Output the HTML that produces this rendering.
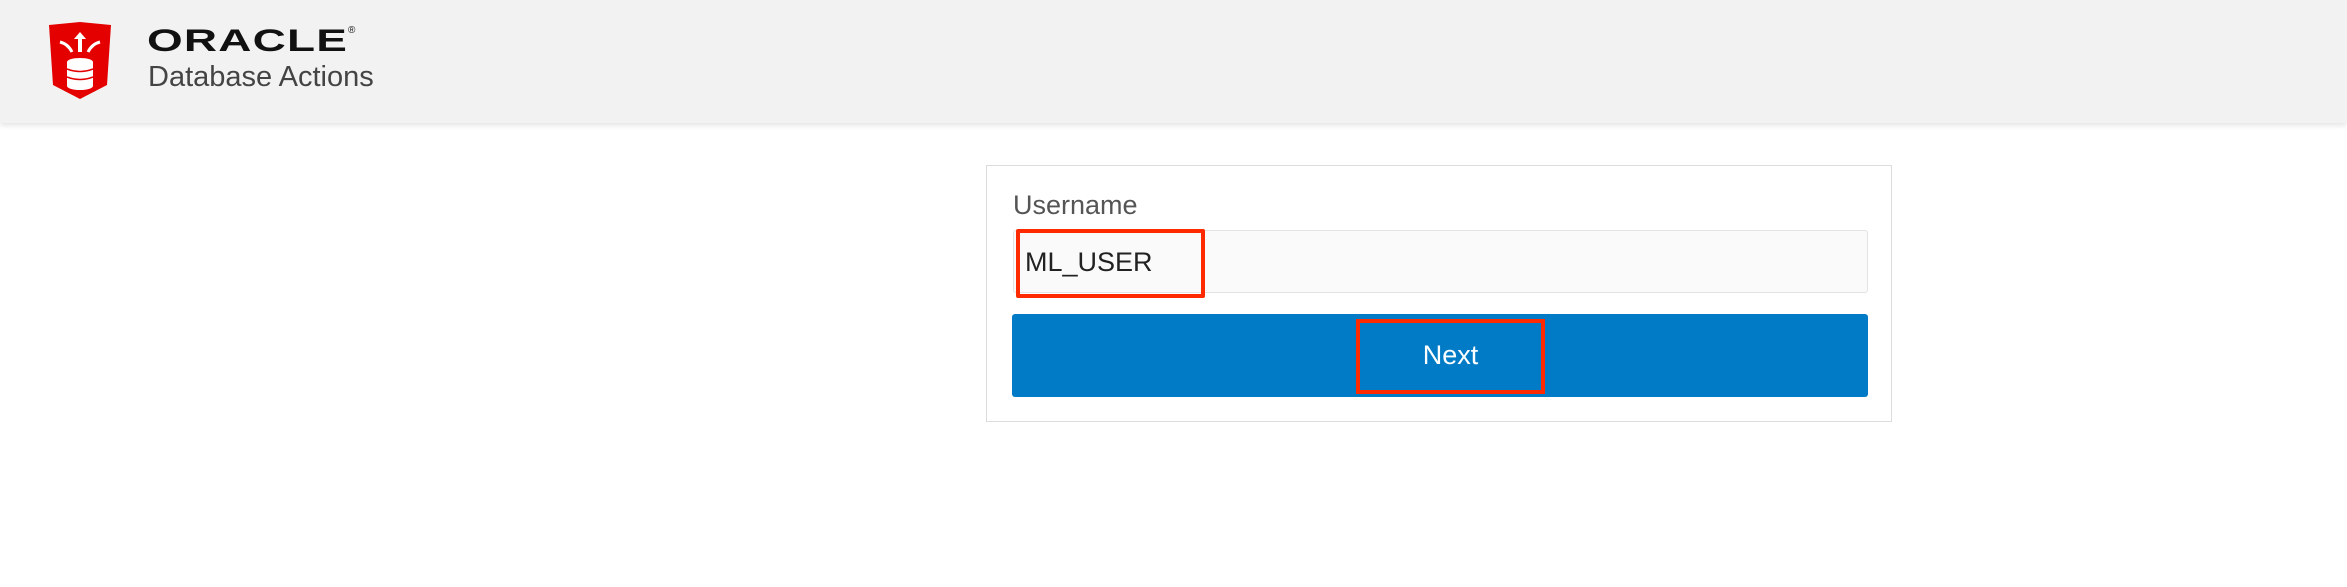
<!DOCTYPE html>
<html><head><meta charset="utf-8"><style>
html,body{margin:0;padding:0;width:2347px;height:587px;background:#fff;overflow:hidden;font-family:"Liberation Sans",sans-serif}
.hdr{position:absolute;left:0;top:0;width:2347px;height:123px;background:#f2f2f2;box-shadow:0 2px 6px rgba(0,0,0,0.12)}
.abs{position:absolute}
</style></head><body>
<div class="hdr"></div>
<svg class="abs" style="left:48px;top:22px" width="64" height="77" viewBox="0 0 64 77">
<path d="M1 3 L32 0 L63 3 L59 63 L32 77 L5 63 Z" fill="#e50000"/>
<path d="M32 10 L26 17 H30 V30 H34 V17 H38 Z" fill="#fff"/>
<path d="M12 20 Q20 22 24 30" stroke="#fff" stroke-width="3" fill="none"/>
<path d="M52 20 Q44 22 40 30" stroke="#fff" stroke-width="3" fill="none"/>
<ellipse cx="32" cy="40" rx="13" ry="4" fill="#fff"/>
<rect x="19" y="40" width="26" height="24" fill="#fff"/>
<ellipse cx="32" cy="64" rx="13" ry="4" fill="#fff"/>
<path d="M19 47 Q32 52 45 47 M19 55 Q32 60 45 55" stroke="#e50000" stroke-width="1.5" fill="none"/>
</svg>
<div class="abs" style="left:147px;top:23px;font-size:37px;font-weight:bold;letter-spacing:1px;color:#111;transform:scale(1.24,0.85);transform-origin:left top">ORACLE</div>
<div class="abs" style="left:348px;top:25px;font-size:10px;color:#111;z-index:2">®</div>
<div class="abs" style="left:148px;top:61px;font-size:29px;color:#444">Database Actions</div>

<div class="abs" style="left:986px;top:165px;width:906px;height:257px;border:1px solid #dcdcdc;box-sizing:border-box"></div>
<div class="abs" style="left:1013px;top:190px;font-size:27px;color:#555">Username</div>
<div class="abs" style="left:1013px;top:230px;width:855px;height:63px;background:#fafafa;border:1px solid #e3e3e3;box-sizing:border-box;border-radius:3px"></div>
<div class="abs" style="left:1025px;top:247px;font-size:27px;color:#222">ML_USER</div>
<div class="abs" style="left:1016px;top:229px;width:189px;height:69px;border:4px solid #ff2a00;box-sizing:border-box;border-radius:2px"></div>
<div class="abs" style="left:1012px;top:314px;width:856px;height:83px;background:#027bc7;border-radius:3px"></div>
<div class="abs" style="left:1356px;top:319px;width:189px;height:75px;border:4px solid #ff2a00;box-sizing:border-box"></div>
<div class="abs" style="left:1356px;top:340px;width:189px;text-align:center;font-size:27px;color:#fff">Next</div>
</body></html>
